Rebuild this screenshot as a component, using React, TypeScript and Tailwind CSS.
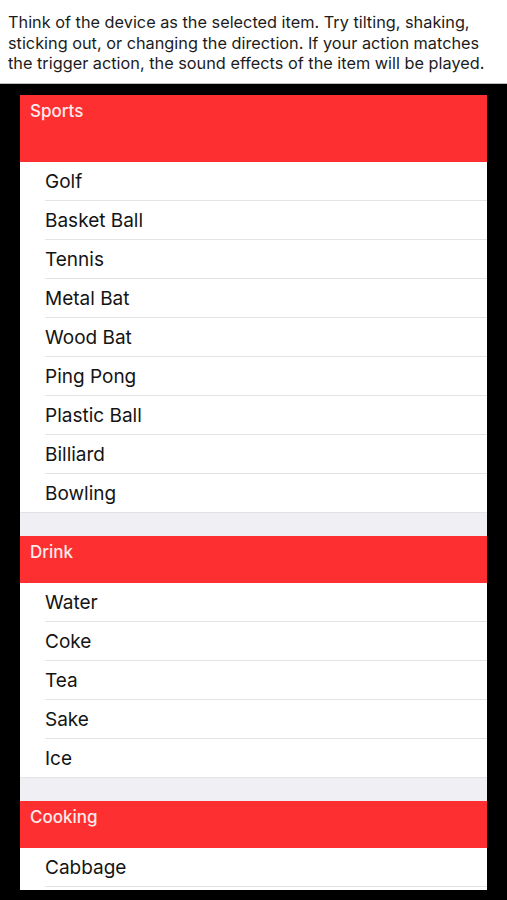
const sections = [
  {
    title: 'Sports',
    tall: true,
    items: ['Golf', 'Basket Ball', 'Tennis', 'Metal Bat', 'Wood Bat', 'Ping Pong', 'Plastic Ball', 'Billiard', 'Bowling'],
  },
  { title: 'Drink', tall: false, items: ['Water', 'Coke', 'Tea', 'Sake', 'Ice'] },
  { title: 'Cooking', tall: false, items: ['Cabbage'] },
];

export default function App() {
  return (
    <div className="w-[507px] h-[900px] overflow-hidden flex flex-col bg-black font-['Inter',sans-serif]">
      <div className="bg-white px-2 pt-[12px] h-[84px] border-b border-[#bdbdbd] text-[16.3px] leading-[20.5px] text-[#1c1c1c] whitespace-nowrap">
        Think of the device as the selected item. Try tilting, shaking,
        <br />
        sticking out, or changing the direction. If your action matches
        <br />
        the trigger action, the sound effects of the item will be played.
      </div>
      <div className="flex-1 px-5 pt-[11px] overflow-hidden">
        <div className="bg-[#efeff4] h-[795px] overflow-hidden flex flex-col">
          {sections.map((s, si) => (
            <div
              key={s.title}
              className={`flex flex-col ${si > 0 ? 'mt-[23px]' : ''} ${si === sections.length - 1 ? 'flex-1' : ''}`}
            >
              <div
                className={`bg-[#fd2f31] px-[10px] pt-[4px] text-[17px] font-medium text-[#fdeaea] ${
                  s.tall ? 'h-[67px]' : 'h-[47px]'
                }`}
              >
                {s.title}
              </div>
              <div className="bg-white flex-1">
                {s.items.map((item, i) => (
                  <div key={item} className="h-[39px] flex flex-col">
                    <div className="flex-1 flex items-center pt-[3px] pl-[25px] text-[19px] text-[#141414]">{item}</div>
                    <div
                      className={`h-px bg-[#e3e3e6] ${
                        i === s.items.length - 1 && si < sections.length - 1 ? 'ml-0' : 'ml-[25px]'
                      }`}
                    />
                  </div>
                ))}
              </div>
            </div>
          ))}
        </div>
      </div>
    </div>
  );
}
